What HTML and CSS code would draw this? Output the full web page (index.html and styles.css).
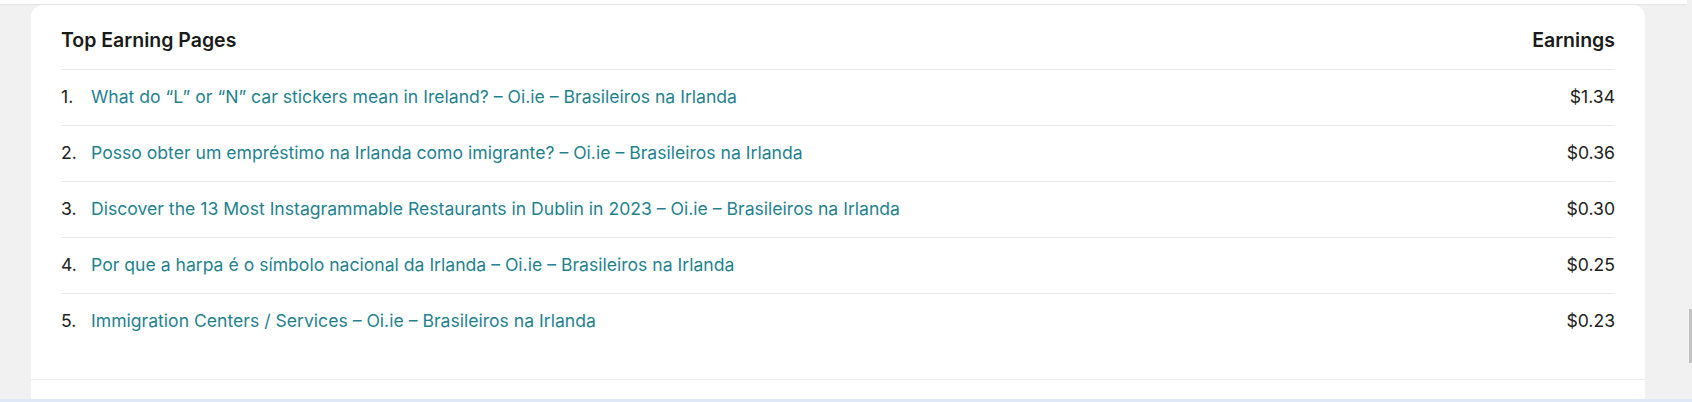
FILE: index.html
```html
<!DOCTYPE html>
<html lang="en">
<head>
<meta charset="utf-8">
<title>Top Earning Pages</title>
<link rel="stylesheet" href="styles.css">
</head>
<body>
  <div class="topbar"></div>
  <div class="main">
    <section class="card">
      <div class="card-body">
        <div class="table-head">
          <span>Top Earning Pages</span>
          <span>Earnings</span>
        </div>
        <ol class="rows">
          <li class="row"><span class="num">1.</span><a class="link" href="#">What do “L” or “N” car stickers mean in Ireland? – Oi.ie – Brasileiros na Irlanda</a><span class="amount">$1.34</span></li>
          <li class="row"><span class="num">2.</span><a class="link" href="#">Posso obter um empréstimo na Irlanda como imigrante? – Oi.ie – Brasileiros na Irlanda</a><span class="amount">$0.36</span></li>
          <li class="row"><span class="num">3.</span><a class="link" href="#">Discover the 13 Most Instagrammable Restaurants in Dublin in 2023 – Oi.ie – Brasileiros na Irlanda</a><span class="amount">$0.30</span></li>
          <li class="row"><span class="num">4.</span><a class="link" href="#">Por que a harpa é o símbolo nacional da Irlanda – Oi.ie – Brasileiros na Irlanda</a><span class="amount">$0.25</span></li>
          <li class="row"><span class="num">5.</span><a class="link" href="#">Immigration Centers / Services – Oi.ie – Brasileiros na Irlanda</a><span class="amount">$0.23</span></li>
        </ol>
      </div>
      <div class="card-foot"></div>
    </section>
  </div>
  <div class="bottom-strip"></div>
  <div class="scroll-thumb"></div>
</body>
</html>
```

FILE: styles.css
```css
* { box-sizing: border-box; }
html, body {
  margin: 0;
  padding: 0;
}
body {
  width: 1692px;
  height: 402px;
  overflow: hidden;
  background: #f1f1f1;
  font-family: Inter, "Noto Sans", sans-serif;
  color: #1d1d1d;
  position: relative;
  display: flex;
  flex-direction: column;
}
.topbar {
  height: 5px;
  width: 1687px;
  background: #ffffff;
  border-bottom: 1px solid #e4e4e4;
  flex: none;
}
.main {
  flex: 1;
  padding: 0 47px 0 31px;
  display: flex;
  flex-direction: column;
  min-height: 0;
}
.card {
  flex: 1;
  background: #ffffff;
  border-radius: 12px 12px 0 0;
  display: flex;
  flex-direction: column;
}
.card-body {
  padding: 0 30px 30px;
}
.table-head {
  height: 65px;
  display: flex;
  justify-content: space-between;
  align-items: center;
  border-bottom: 1px solid #ebebeb;
  font-size: 19.5px;
  font-weight: 600;
  color: #1a1a1a;
  padding-top: 6px;
}
.rows {
  list-style: none;
  margin: 0;
  padding: 0;
}
.row {
  height: 56px;
  display: flex;
  align-items: center;
  border-bottom: 1px solid #ebebeb;
  font-size: 17.6px;
  padding-bottom: 3px;
}
.row:last-child {
  border-bottom: none;
  height: 55px;
}
.num {
  width: 30px;
  flex: none;
  color: #222222;
}
.link {
  flex: 1;
  color: #1f8290;
  text-decoration: none;
}
.amount {
  color: #222222;
}
.card-foot {
  flex: 1;
  border-top: 1px solid #ebebeb;
}
.bottom-strip {
  height: 3px;
  background: #dfe8f6;
  flex: none;
}
.scroll-thumb {
  position: absolute;
  right: 0;
  top: 309px;
  width: 3px;
  height: 54px;
  background: #c1c1c1;
}
```
